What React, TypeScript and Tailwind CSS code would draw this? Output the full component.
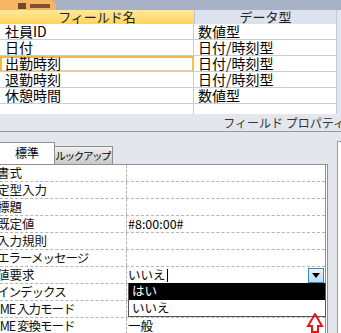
import React from "react";

const fields = [
  { name: "社員ID", type: "数値型" },
  { name: "日付", type: "日付/時刻型" },
  { name: "出勤時刻", type: "日付/時刻型", selected: true },
  { name: "退勤時刻", type: "日付/時刻型" },
  { name: "休憩時間", type: "数値型" },
];

const props = [
  { label: "書式", value: "" },
  { label: "定型入力", value: "" },
  { label: "標題", value: "" },
  { label: "既定値", value: "#8:00:00#" },
  { label: "入力規則", value: "" },
  { label: "エラーメッセージ", value: "", kana: true },
  { label: "値要求", value: "いいえ", active: true },
  { label: "インデックス", value: "", kana: true },
  { label: "IME 入力モード", value: "", kana: true },
  { label: "IME 変換モード", value: "一般", kana: true },
];

const font = { fontFamily: '"Noto Sans CJK JP", "Noto Sans", sans-serif' };

const App: React.FC = () => {
  return (
    <div className="relative w-[341px] h-[333px] overflow-hidden bg-[#e4e6ee] text-black" style={font}>
      {/* top tab strip */}
      <div className="h-[10px] bg-[#a8b2c6] flex">
        <div className="w-[56px] h-full bg-[#f7b562] rounded-tr-[6px] flex items-end pl-[18px]">
          <div className="w-[8px] h-[6px] bg-[#6b4a2a] mb-[1px]" />
          <div className="w-[20px] h-[4px] bg-[#7a5230] ml-[4px] mb-[2px]" />
        </div>
      </div>

      {/* field table */}
      <div className="w-[337px] bg-white border-r border-[#c3cbd9]">
        <div className="flex h-[14px] text-[13px] leading-[14px] text-[#222]">
          <div className="w-[194px] bg-gradient-to-b from-[#ffe89a] to-[#ffd45a] text-center">フィールド名</div>
          <div className="flex-1 bg-[#dde3ee] border-l border-[#b8c2d4] text-center">データ型</div>
        </div>
        {fields.map((f) => (
          <div key={f.name} className="flex h-[16px] text-[14px] leading-[15px] border-b border-[#c6cedc]">
            <div
              className={`w-[194px] pl-[5px] whitespace-nowrap ${
                f.selected
                  ? "shadow-[inset_0_2px_0_#f4b83a,inset_2px_0_0_#f4b83a,inset_-2px_0_0_#f4c24a,inset_0_-1px_0_#f8d060]"
                  : "border-r border-[#c6cedc]"
              }`}
            >
              {f.name}
            </div>
            <div className="flex-1 pl-[4px] whitespace-nowrap">{f.type}</div>
          </div>
        ))}
        <div className="flex h-[10px]">
          <div className="w-[194px] border-r border-[#c6cedc]" />
        </div>
      </div>

      {/* field properties label */}
      <div className="h-[17px] flex justify-end items-center whitespace-nowrap">
        <span className="text-[12px] text-[#333] -mr-[4px]">フィールド プロパティ</span>
      </div>
      <div className="h-px bg-[#9a9a9a]" />

      <div className="flex h-[201px] pt-[10px]">
        <div className="w-[330px] flex flex-col">
          {/* tabs */}
          <div className="flex h-[22px] items-end">
            <div className="w-[55px] h-[22px] bg-white border border-b-0 border-l-0 border-[#8f8f8f] text-[12px] leading-[20px] text-center">標準</div>
            <div className="w-[58px] h-[18px] bg-gradient-to-b from-[#f0f0f0] to-[#c9c9c9] border border-l-0 border-b-0 border-[#8f8f8f] text-[10.5px] leading-[17px] text-center whitespace-nowrap overflow-hidden [font-feature-settings:'palt']">
              ルックアップ
            </div>
          </div>
          {/* property grid */}
          <div className="w-[328px] bg-white border-t border-r-[3px] border-double border-[#8f8f8f] flex-1">
            {props.map((p) => (
              <div key={p.label} className="relative flex h-[17px] text-[12.5px] leading-[16px] border-b border-dashed border-[#b5b5b5]">
                <div
                  className={`w-[130px] -ml-[3px] border-r border-dashed border-[#b5b5b5] whitespace-pre overflow-hidden text-[#111] ${
                    p.kana ? "tracking-[-1px]" : ""
                  }`}
                >
                  {p.label}
                </div>
                <div className="flex-1 pl-[1px] whitespace-nowrap flex items-center">
                  <span>{p.value}</span>
                  {p.active && <span className="w-px h-[13px] bg-black ml-[1px]" />}
                </div>
                {p.active && (
                  <div className="absolute right-[1px] top-[1px] w-[16px] h-[15px] border border-[#3c86c4] bg-gradient-to-b from-[#eaf4fc] to-[#b9dcf6] flex items-center justify-center">
                    <svg width="8" height="5" viewBox="0 0 8 5">
                      <path d="M0 0 H8 L4 5 Z" fill="#000" />
                    </svg>
                  </div>
                )}
              </div>
            ))}
          </div>
        </div>
        <div className="ml-[7px] mt-[-1px] w-[4px] border-l border-t border-[#9a9a9a] bg-white" />
      </div>

      {/* dropdown list */}
      <div className="absolute left-[128px] top-[283px] w-[198px] h-[34px] bg-white border border-[#555] border-t-0 text-[12.5px] leading-[16px]">
        <div className="h-[17px] bg-black text-white pl-[3px]">はい</div>
        <div className="h-[16px] pl-[3px]">いいえ</div>
      </div>

      {/* red arrow */}
      <svg className="absolute left-[306px] top-[313px]" width="18" height="20" viewBox="0 0 18 20">
        <path d="M9 1 L16 13 L12 13 L12 19 L6 19 L6 13 L2 13 Z" fill="none" stroke="#e8131b" strokeWidth="2" />
      </svg>
    </div>
  );
};

export default App;
